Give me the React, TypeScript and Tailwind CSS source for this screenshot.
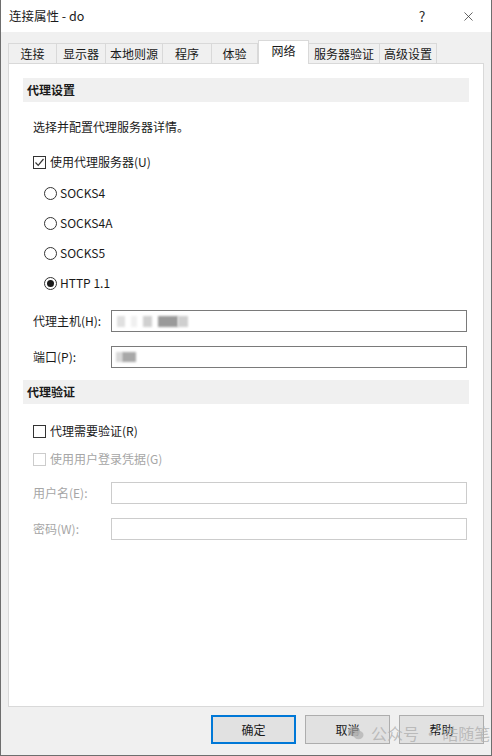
import { X } from 'lucide-react'

const font = { fontFamily: '"Noto Sans CJK SC", "Noto Sans", sans-serif' }

const tabs = [
  { name: '连接', w: 'w-[49px]' },
  { name: '显示器', w: 'w-[49px]' },
  { name: '本地则源', w: 'w-[57px]' },
  { name: '程序', w: 'w-[49px]' },
  { name: '体验', w: 'w-[46px]' },
  { name: '网络', w: 'w-[51px]', active: true },
  { name: '服务器验证', w: 'w-[71px]' },
  { name: '高级设置', w: 'w-[57px]' },
]

function SectionHeader({ title }: { title: string }) {
  return (
    <div className="h-[24px] bg-[#f0f0f0] flex items-center pl-[4px] font-bold text-[12px] text-[#1a1a1a]">
      {title}
    </div>
  )
}

function CheckBox({ checked, disabled }: { checked?: boolean; disabled?: boolean }) {
  return (
    <span
      className={`w-[13px] h-[13px] border bg-white flex items-center justify-center shrink-0 ${
        disabled ? 'border-[#cccccc]' : 'border-[#333333]'
      }`}
    >
      {checked && (
        <svg width="11" height="11" viewBox="0 0 11 11">
          <path d="M1.5 5.5 L4.2 8.3 L9.5 2" fill="none" stroke="#333" strokeWidth="1.2" />
        </svg>
      )}
    </span>
  )
}

function Radio({ checked }: { checked?: boolean }) {
  return (
    <span className="w-[13px] h-[13px] rounded-full border border-[#333333] bg-white flex items-center justify-center shrink-0">
      {checked && <span className="w-[7px] h-[7px] rounded-full bg-[#1a1a1a]" />}
    </span>
  )
}

export default function App() {
  return (
    <div
      className="w-[492px] h-[756px] bg-[#f0f0f0] border-x border-b border-[#6e6e6e] flex flex-col text-[12px] text-[#1a1a1a] relative overflow-hidden"
      style={font}
    >
      {/* Title bar */}
      <div className="h-[32px] bg-white flex items-center shrink-0">
        <span className="pl-[8px] text-[12.5px] flex-1">连接属性 - do</span>
        <span className="w-[46px] text-center text-[14px] text-[#333]">?</span>
        <span className="w-[46px] flex justify-center">
          <X className="w-[15px] h-[15px] text-[#333]" strokeWidth={1.2} />
        </span>
      </div>

      {/* Tabs */}
      <div className="h-[31px] flex items-end pl-[7px] shrink-0">
        {tabs.map((t) => (
          <div
            key={t.name}
            className={`${t.w} flex items-center justify-center border-t border-r border-[#d9d9d9] ${
              t.active
                ? 'h-[24px] bg-white relative z-10 -mb-px border-l pb-[3px]'
                : 'h-[20px] bg-[#f0f0f0] first:border-l'
            }`}
          >
            {t.name}
          </div>
        ))}
      </div>

      {/* Panel */}
      <div className="h-[644px] mx-[7px] mr-[7px] bg-white border border-[#d9d9d9] px-[14px] pt-[14px] flex flex-col shrink-0">
        <SectionHeader title="代理设置" />
        <div className="mt-[15px] h-[20px] flex items-center pl-[10px]">选择并配置代理服务器详情。</div>
        <div className="mt-[15px] h-[20px] flex items-center pl-[10px] gap-[4px]">
          <CheckBox checked />
          <span>使用代理服务器(U)</span>
        </div>
        <div className="mt-[6px] flex flex-col pl-[21px]">
          {['SOCKS4', 'SOCKS4A', 'SOCKS5', 'HTTP 1.1'].map((r) => (
            <div key={r} className="h-[30px] flex items-center gap-[3px]">
              <Radio checked={r === 'HTTP 1.1'} />
              <span>{r}</span>
            </div>
          ))}
        </div>
        <div className="mt-[12px] h-[22px] flex items-center pl-[10px]">
          <span className="w-[78px]">代理主机(H):</span>
          <div className="w-[356px] h-[22px] border border-[#7a7a7a] flex items-center pl-[5px] gap-[6px]">
            <span className="w-[8px] h-[11px] bg-[#e0e0e0] blur-[1px]" />
            <span className="w-[6px] h-[11px] bg-[#f0f0f0] blur-[1px]" />
            <span className="w-[9px] h-[11px] bg-[#d0d0d0] blur-[1px]" />
            <span className="flex">
              <span className="w-[20px] h-[11px] bg-[#9a9a9a] blur-[1px]" />
              <span className="w-[10px] h-[11px] bg-[#cfcfcf] blur-[1px]" />
            </span>
          </div>
        </div>
        <div className="mt-[14px] h-[22px] flex items-center pl-[10px]">
          <span className="w-[78px]">端口(P):</span>
          <div className="w-[356px] h-[22px] border border-[#7a7a7a] flex items-center pl-[4px]">
            <span className="w-[6px] h-[10px] bg-[#d8d8d8] blur-[1px]" />
            <span className="w-[14px] h-[10px] bg-[#a8a8a8] blur-[1px]" />
          </div>
        </div>
        <div className="mt-[12px]">
          <SectionHeader title="代理验证" />
        </div>
        <div className="mt-[17px] h-[20px] flex items-center pl-[10px] gap-[4px]">
          <CheckBox />
          <span>代理需要验证(R)</span>
        </div>
        <div className="mt-[8px] h-[20px] flex items-center pl-[10px] gap-[4px] text-[#a6a6a6]">
          <CheckBox disabled />
          <span>使用用户登录凭据(G)</span>
        </div>
        <div className="mt-[13px] h-[22px] flex items-center pl-[10px] text-[#a6a6a6]">
          <span className="w-[78px]">用户名(E):</span>
          <div className="w-[356px] h-[22px] border border-[#cccccc]" />
        </div>
        <div className="mt-[14px] h-[22px] flex items-center pl-[10px] text-[#a6a6a6]">
          <span className="w-[78px]">密码(W):</span>
          <div className="w-[356px] h-[22px] border border-[#cccccc]" />
        </div>
      </div>

      {/* Buttons */}
      <div className="flex-1 flex justify-end items-start pt-[8px] pr-[7px] gap-[9px]">
        <button className="w-[85px] h-[29px] bg-[#e1e1e1] border-2 border-[#0078d7] text-[12px]">确定</button>
        <button className="w-[85px] h-[29px] bg-[#e1e1e1] border border-[#adadad] text-[12px]">取消</button>
        <button className="w-[85px] h-[29px] bg-[#e1e1e1] border border-[#adadad] text-[12px]">帮助</button>
      </div>

      {/* Watermark */}
      <div className="absolute left-[346px] top-[721px] flex items-center gap-[6px] text-[16px] text-[#b0b0b0]/80 pointer-events-none">
        <svg width="18" height="18" viewBox="0 0 18 18">
          <ellipse cx="7" cy="7.5" rx="6" ry="5" fill="#9a9a9a" opacity="0.7" />
          <ellipse cx="11.5" cy="11" rx="5" ry="4.2" fill="#b5b5b5" opacity="0.8" />
        </svg>
        <span>公众号 · 皓随笔</span>
      </div>
    </div>
  )
}
